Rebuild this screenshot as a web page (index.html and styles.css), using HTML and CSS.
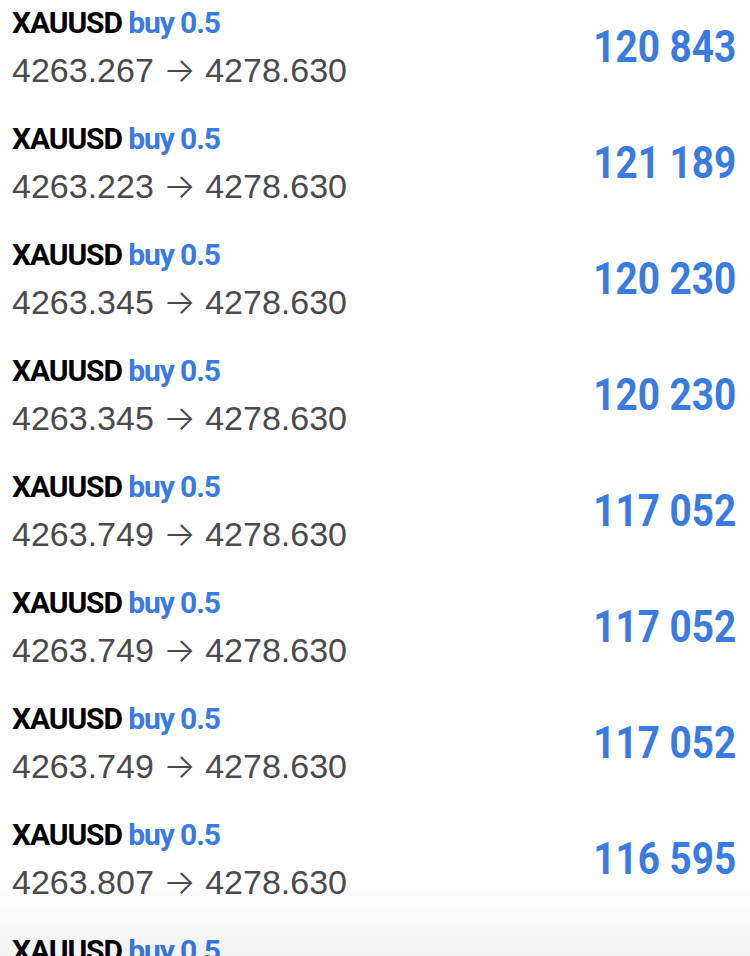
FILE: index.html
```html
<!DOCTYPE html>
<html lang="en">
<head>
	<meta charset="utf-8">
	<title>Positions</title>
	<link rel="stylesheet" href="styles.css">
</head>
<body>
	<div class="list">
		<div class="row">
			<div class="info">
				<div class="title"><span class="symbol">XAUUSD</span> <span class="side">buy 0.5</span></div>
				<div class="prices">4263.267 <span class="arrow">→</span> 4278.630</div>
			</div>
			<div class="profit">120 843</div>
		</div>
		<div class="row">
			<div class="info">
				<div class="title"><span class="symbol">XAUUSD</span> <span class="side">buy 0.5</span></div>
				<div class="prices">4263.223 <span class="arrow">→</span> 4278.630</div>
			</div>
			<div class="profit">121 189</div>
		</div>
		<div class="row">
			<div class="info">
				<div class="title"><span class="symbol">XAUUSD</span> <span class="side">buy 0.5</span></div>
				<div class="prices">4263.345 <span class="arrow">→</span> 4278.630</div>
			</div>
			<div class="profit">120 230</div>
		</div>
		<div class="row">
			<div class="info">
				<div class="title"><span class="symbol">XAUUSD</span> <span class="side">buy 0.5</span></div>
				<div class="prices">4263.345 <span class="arrow">→</span> 4278.630</div>
			</div>
			<div class="profit">120 230</div>
		</div>
		<div class="row">
			<div class="info">
				<div class="title"><span class="symbol">XAUUSD</span> <span class="side">buy 0.5</span></div>
				<div class="prices">4263.749 <span class="arrow">→</span> 4278.630</div>
			</div>
			<div class="profit">117 052</div>
		</div>
		<div class="row">
			<div class="info">
				<div class="title"><span class="symbol">XAUUSD</span> <span class="side">buy 0.5</span></div>
				<div class="prices">4263.749 <span class="arrow">→</span> 4278.630</div>
			</div>
			<div class="profit">117 052</div>
		</div>
		<div class="row">
			<div class="info">
				<div class="title"><span class="symbol">XAUUSD</span> <span class="side">buy 0.5</span></div>
				<div class="prices">4263.749 <span class="arrow">→</span> 4278.630</div>
			</div>
			<div class="profit">117 052</div>
		</div>
		<div class="row">
			<div class="info">
				<div class="title"><span class="symbol">XAUUSD</span> <span class="side">buy 0.5</span></div>
				<div class="prices">4263.807 <span class="arrow">→</span> 4278.630</div>
			</div>
			<div class="profit">116 595</div>
		</div>
		<div class="row">
			<div class="info">
				<div class="title"><span class="symbol">XAUUSD</span> <span class="side">buy 0.5</span></div>
				<div class="prices">4263.807 <span class="arrow">→</span> 4278.630</div>
			</div>
			<div class="profit">116 595</div>
		</div>
	</div>
	<div class="fade"></div>
</body>
</html>
```

FILE: styles.css
```css
html, body {
	margin: 0;
	padding: 0;
	background: #ffffff;
	height: 100%;
	overflow: hidden;
}

.list {
	display: flex;
	flex-direction: column;
}

.row {
	height: 116px;
	display: flex;
	align-items: flex-start;
	justify-content: space-between;
	padding: 6px 14px 0 12px;
	box-sizing: border-box;
}

.title {
	font-family: Roboto, sans-serif;
	font-weight: bold;
	font-size: 30px;
	line-height: 34px;
	letter-spacing: -1.1px;
}

.symbol {
	color: #000000;
}

.side {
	color: #3a7be0;
}

.prices {
	font-family: "Liberation Sans", Arial, sans-serif;
	font-size: 34px;
	line-height: 44px;
	color: #4a4a4d;
	margin-top: 8px;
}

.arrow {
	font-family: Inter, "DejaVu Sans", sans-serif;
	font-weight: 300;
	font-size: 34px;
}

.profit {
	font-family: Roboto, sans-serif;
	font-weight: bold;
	font-size: 45px;
	line-height: 52px;
	color: #3a7be0;
	margin-top: 15px;
	transform: scaleX(0.86);
	transform-origin: right center;
}

.fade {
	position: fixed;
	left: 0;
	right: 0;
	bottom: 0;
	height: 70px;
	background: linear-gradient(rgba(0,0,0,0), rgba(0,0,0,0.05));
	pointer-events: none;
}
```
